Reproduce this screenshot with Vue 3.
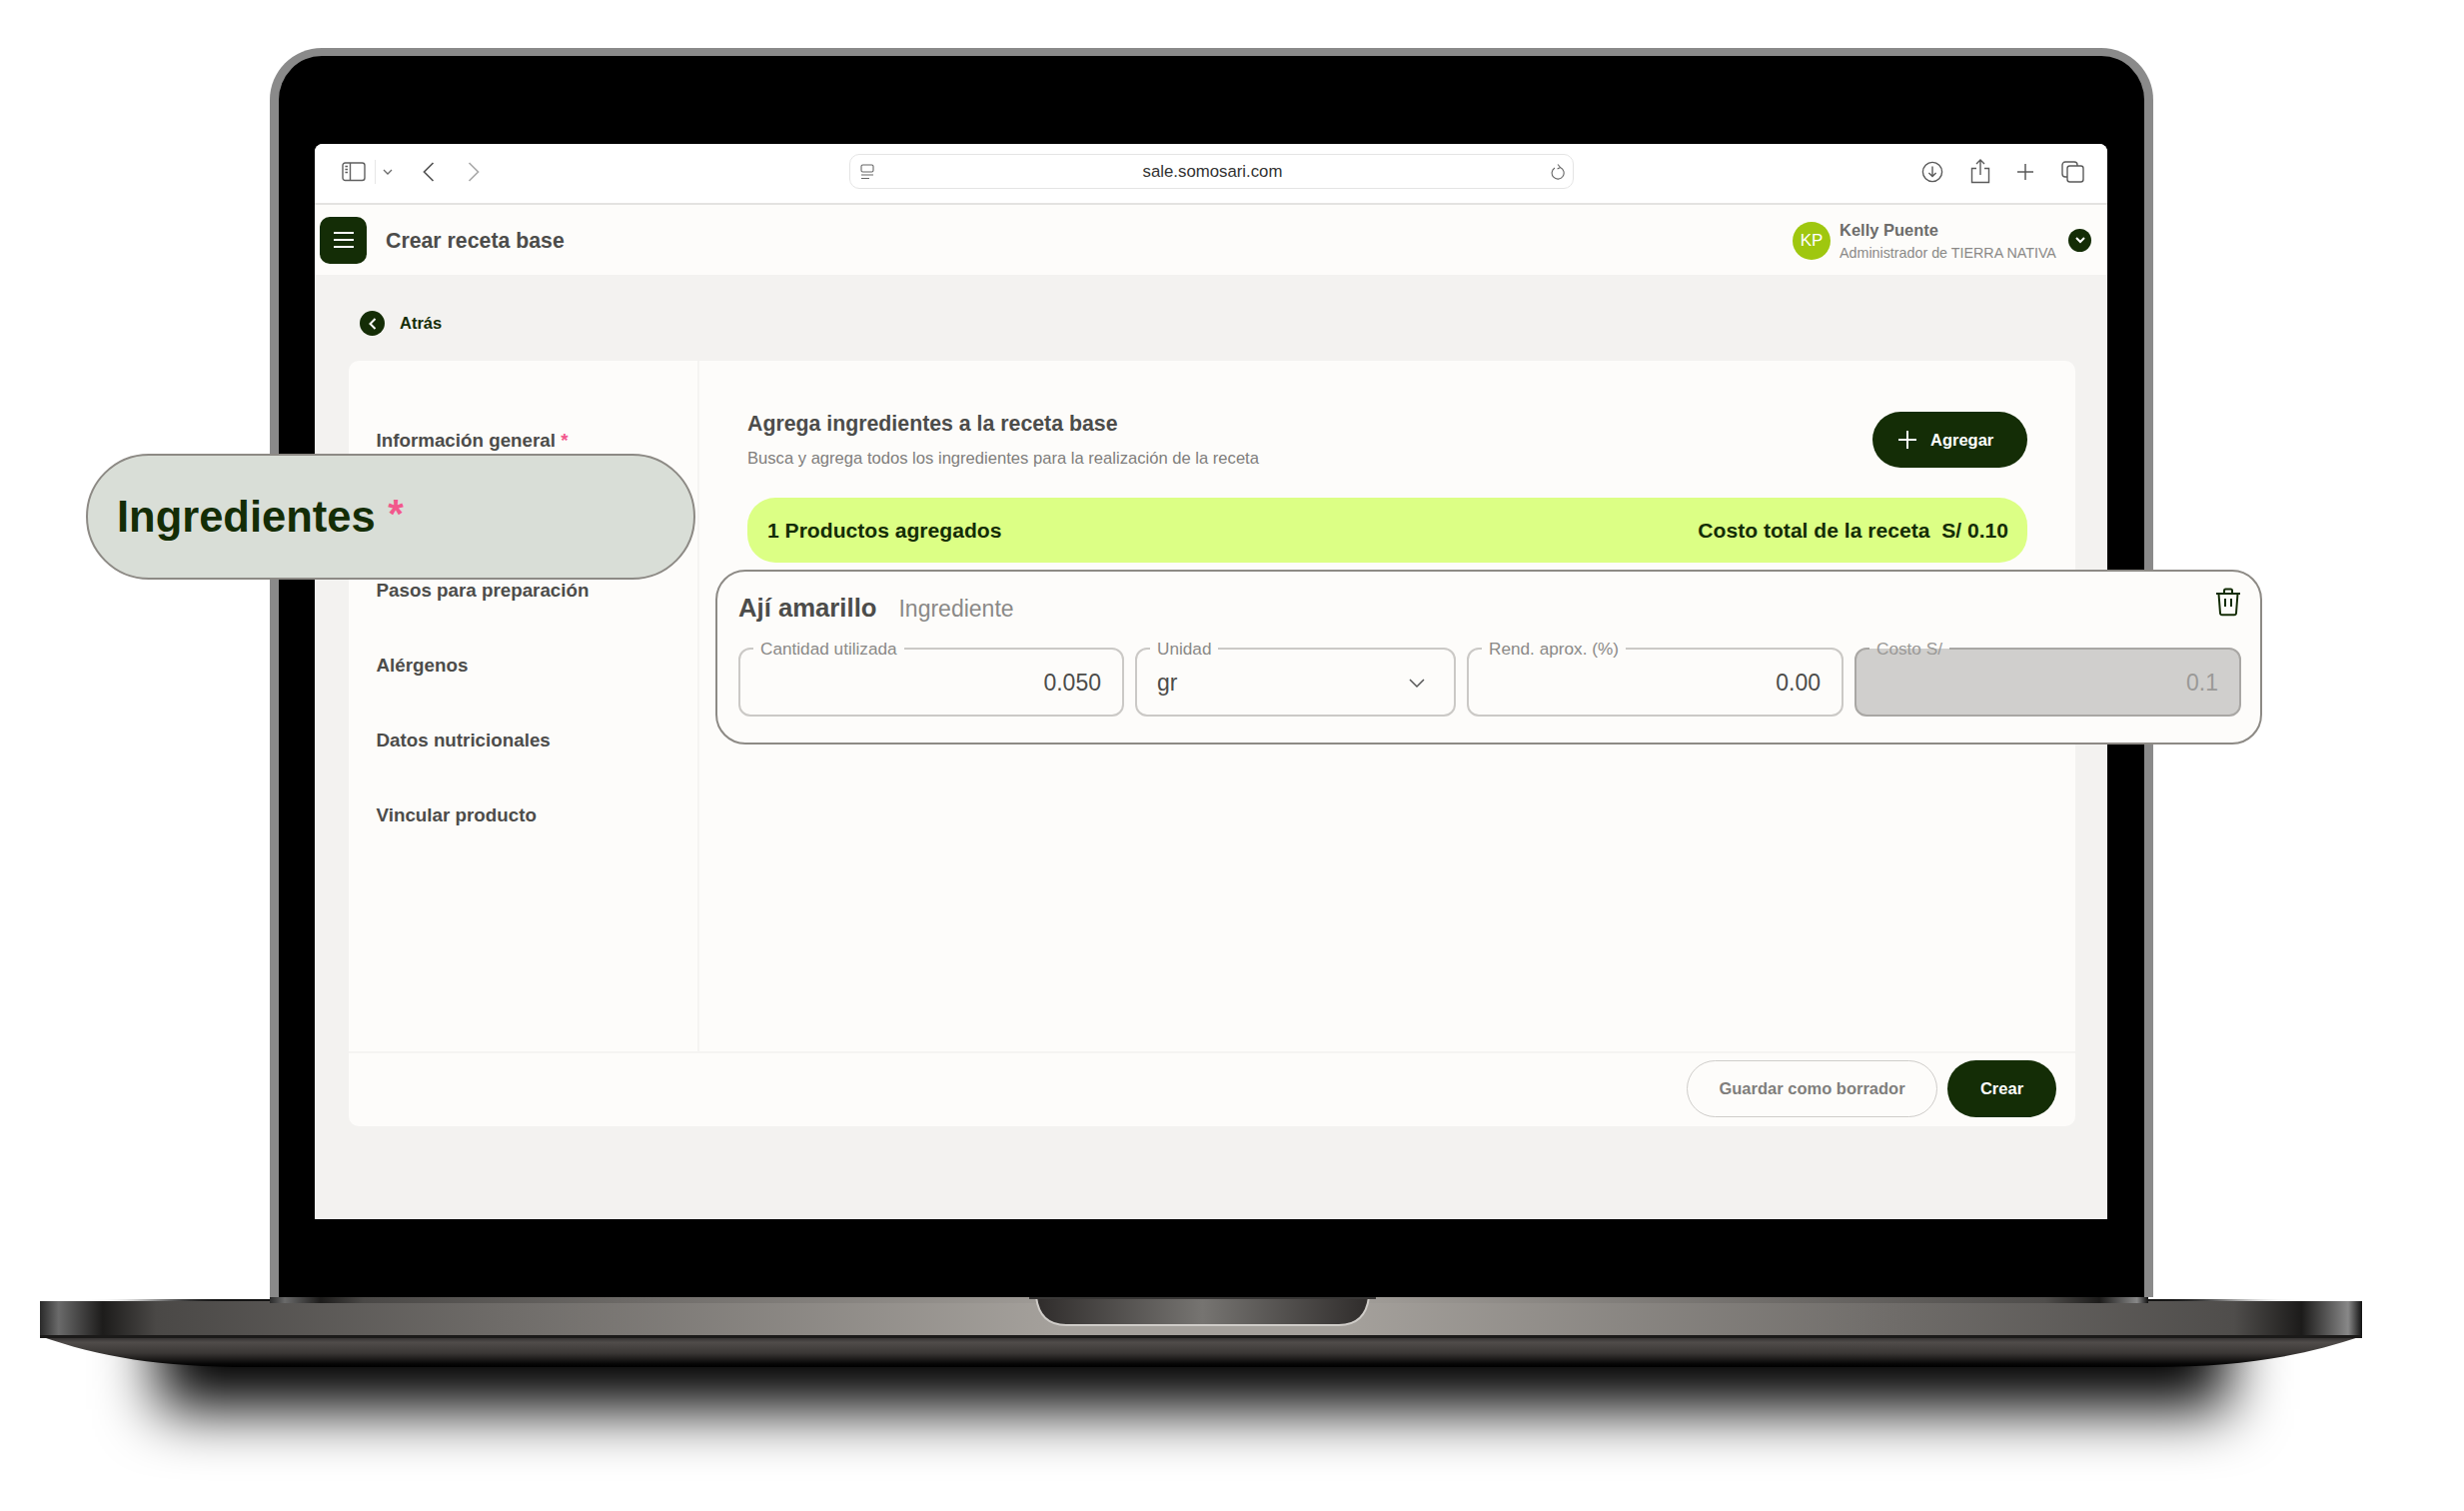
<script setup>
const sections = [
  { label: 'Información general', required: true },
  { spacer: true },
  { label: 'Pasos para preparación' },
  { label: 'Alérgenos' },
  { label: 'Datos nutricionales' },
  { label: 'Vincular producto' },
]
</script>

<template>
  <div class="canvas">
    <div class="floor-shadow"></div>
    <div class="lid">
      <div class="screen">
        <div class="browserbar">
          <div class="bar-left">
            <svg class="ic-sidebar" width="24" height="20" viewBox="0 0 24 20" fill="none" stroke="#5f5f5f" stroke-width="1.4">
              <rect x="1" y="1" width="22" height="17.5" rx="2.5" />
              <path d="M8.5 1v17.5M3.4 4.5h2.6M3.4 7.5h2.6M3.4 10.5h2.6" />
            </svg>
            <span class="sep"></span>
            <svg class="ic-down" width="10" height="6" viewBox="0 0 10 6" fill="none" stroke="#6b6b6b" stroke-width="1.3"><path d="M1 1l4 4 4-4" /></svg>
            <svg class="ic-back" width="12" height="20" viewBox="0 0 12 20" fill="none" stroke="#555" stroke-width="1.7"><path d="M10.5 1L1.5 10l9 9" /></svg>
            <svg class="ic-fwd" width="12" height="20" viewBox="0 0 12 20" fill="none" stroke="#aaa" stroke-width="1.7"><path d="M1.5 1l9 9-9 9" /></svg>
          </div>
          <div class="urlbar">
            <svg class="ic-page" width="14" height="16" viewBox="0 0 14 16" fill="none" stroke="#666" stroke-width="1.1">
              <rect x="1" y="1" width="12" height="7" rx="1.5" />
              <path d="M1 11h12M1 14.5h8" />
            </svg>
            <span class="url">sale.somosari.com</span>
            <svg class="ic-reload" width="14" height="18" viewBox="0 0 14 18" fill="none" stroke="#666" stroke-width="1.1">
              <path d="M9.5 4.6A6 6 0 1 1 4 5M7 1.5l2.6 3-3 1.6" />
            </svg>
          </div>
          <div class="bar-right">
            <svg width="22" height="22" viewBox="0 0 22 22" fill="none" stroke="#5a5a5a" stroke-width="1.4"><circle cx="11" cy="11" r="9.6" /><path d="M11 5.5v10M7.4 12l3.6 3.6 3.6-3.6" /></svg>
            <svg width="20" height="25" viewBox="0 0 20 25" fill="none" stroke="#5a5a5a" stroke-width="1.4"><path d="M6 9.5H1.5v14h17v-14H14M10 16V1.5M6 5l4-4 4 4" /></svg>
            <svg width="18" height="18" viewBox="0 0 18 18" fill="none" stroke="#5a5a5a" stroke-width="1.5"><path d="M9 1v16M1 9h16" /></svg>
            <svg width="23" height="22" viewBox="0 0 23 22" fill="none" stroke="#5a5a5a" stroke-width="1.4"><rect x="6" y="5" width="16" height="16" rx="2.5" /><path d="M6 16H4a3 3 0 0 1-3-3V4a3 3 0 0 1 3-3h9a3 3 0 0 1 3 3v1" /></svg>
          </div>
        </div>

        <header class="apphead">
          <div class="head-left">
            <button class="menu-btn" type="button">
              <svg width="22" height="18" viewBox="0 0 22 18" fill="none" stroke="#fff" stroke-width="2.2"><path d="M1 2h20M1 9h20M1 16h20" /></svg>
            </button>
            <h1 class="page-title">Crear receta base</h1>
          </div>
          <div class="user">
            <span class="avatar">KP</span>
            <div class="user-text">
              <span class="user-name">Kelly Puente</span>
              <span class="user-role">Administrador de TIERRA NATIVA</span>
            </div>
            <span class="user-chev">
              <svg width="10" height="7" viewBox="0 0 10 7" fill="none" stroke="#fff" stroke-width="2"><path d="M1 1l4 4 4-4" /></svg>
            </span>
          </div>
        </header>

        <main class="content">
          <div class="back">
            <span class="back-dot">
              <svg width="8" height="12" viewBox="0 0 8 12" fill="none" stroke="#fff" stroke-width="2"><path d="M6.5 1L1.5 6l5 5" /></svg>
            </span>
            <span class="back-text">Atrás</span>
          </div>

          <section class="card">
            <div class="card-body">
              <nav class="side">
                <template v-for="(s, i) in sections" :key="i">
                  <span v-if="s.spacer" class="side-item"></span>
                  <a v-else class="side-item">{{ s.label }}<span v-if="s.required" class="req"> *</span></a>
                </template>
              </nav>
              <div class="pane">
                <div class="pane-head">
                  <div>
                    <h2 class="pane-title">Agrega ingredientes a la receta base</h2>
                    <p class="pane-sub">Busca y agrega todos los ingredientes para la realización de la receta</p>
                  </div>
                  <button class="add-btn" type="button">
                    <svg width="18" height="18" viewBox="0 0 18 18" fill="none" stroke="#fff" stroke-width="2"><path d="M9 0v18M0 9h18" /></svg>
                    Agregar
                  </button>
                </div>
                <div class="summary">
                  <span>1 Productos agregados</span>
                  <span>Costo total de la receta&nbsp; S/ 0.10</span>
                </div>
              </div>
            </div>
            <footer class="card-foot">
              <button class="ghost-btn" type="button">Guardar como borrador</button>
              <button class="solid-btn" type="button">Crear</button>
            </footer>
          </section>
        </main>
      </div>
    </div>

    <div class="base">
      <svg width="2324" height="72" viewBox="0 0 2324 72">
        <defs>
          <linearGradient id="band" x1="0" x2="1" y1="0" y2="0">
            <stop offset="0" stop-color="#2a2a2a" />
            <stop offset="0.008" stop-color="#6a6a6a" />
            <stop offset="0.027" stop-color="#1d1c1b" />
            <stop offset="0.05" stop-color="#4a4846" />
            <stop offset="0.2" stop-color="#6f6c69" />
            <stop offset="0.44" stop-color="#a5a19c" />
            <stop offset="0.56" stop-color="#a5a19c" />
            <stop offset="0.8" stop-color="#6f6c69" />
            <stop offset="0.945" stop-color="#4f4d4b" />
            <stop offset="0.974" stop-color="#1c1b1a" />
            <stop offset="0.994" stop-color="#888" />
            <stop offset="1" stop-color="#111" />
          </linearGradient>
          <linearGradient id="under" x1="0" x2="0" y1="0" y2="1">
            <stop offset="0" stop-color="#2b2928" />
            <stop offset="0.2" stop-color="#504c4a" />
            <stop offset="0.55" stop-color="#3a3735" />
            <stop offset="0.9" stop-color="#060606" />
            <stop offset="1" stop-color="#000" />
          </linearGradient>
          <linearGradient id="notch" x1="0" x2="1" y1="0" y2="0">
            <stop offset="0" stop-color="#2f2c2b" />
            <stop offset="0.5" stop-color="#767471" />
            <stop offset="1" stop-color="#2f2c2b" />
          </linearGradient>
        </defs>
        <path d="M0 39 C60 60 120 70 210 70 H2114 C2200 70 2262 60 2324 39 Z" fill="url(#under)" />
        <rect x="0" y="4" width="2324" height="36" fill="url(#band)" />
        <rect x="230" y="0" width="1880" height="6" fill="url(#band)" />
        <rect x="0" y="38" width="2324" height="3" fill="#1b1a19" />
        <path d="M997 0 H1330 C1328 16 1320 28 1300 28 H1027 C1007 28 999 16 997 0 Z" fill="url(#notch)" stroke="#cfccc8" stroke-width="2" />
        <rect x="990" y="0" width="347" height="2" fill="#3a3837" />
      </svg>
    </div>

    <div class="pill">
      <span class="pill-text">Ingredientes</span>
      <span class="pill-star">*</span>
    </div>

    <div class="ingredient">
      <div class="ing-head">
        <div class="ing-title">
          <strong>Ají amarillo</strong>
          <span>Ingrediente</span>
        </div>
        <svg class="trash" width="26" height="29" viewBox="0 0 26 29" fill="none" stroke="#142d06" stroke-width="2">
          <path d="M1 6h24M9 6V3a1.500 1.500 0 0 1 1.500-1.500h5A1.500 1.500 0 0 1 17 3v3M3.500 6l1.500 19.500a2 2 0 0 0 2 1.800h12a2 2 0 0 0 2-1.800L22.500 6M10 11v8M16 11v8" />
        </svg>
      </div>
      <div class="fields">
        <div class="field f1"><label>Cantidad utilizada</label><div class="val right">0.050</div></div>
        <div class="field f2">
          <label>Unidad</label>
          <div class="val">gr</div>
          <svg class="select-chev" width="16" height="10" viewBox="0 0 16 10" fill="none" stroke="#555" stroke-width="1.500"><path d="M1 1l7 7 7-7" /></svg>
        </div>
        <div class="field f3"><label>Rend. aprox. (%)</label><div class="val right">0.00</div></div>
        <div class="field f4 disabled"><label>Costo S/</label><div class="val right">0.1</div></div>
      </div>
    </div>
  </div>
</template>

<style>
html, body { margin: 0; background: #fff; }
</style>

<style scoped>
* { box-sizing: border-box; }
.canvas {
  position: relative;
  width: 2466px;
  height: 1512px;
  padding-top: 48px;
  overflow: hidden;
  background: #fff;
  font-family: "Liberation Sans", Arial, sans-serif;
}
.lid {
  position: relative;
  z-index: 2;
  width: 1885px;
  height: 1250px;
  margin-left: 270px;
  padding: 88px 36px 0 36px;
  background: #000;
  border: solid #8a8a8a;
  border-width: 8px 9px 0 9px;
  border-radius: 52px 52px 0 0;
}
.screen {
  width: 1794px;
  height: 1076px;
  background: #f3f2f0;
  border-radius: 8px 8px 0 0;
  overflow: hidden;
}
.browserbar {
  height: 61px;
  padding-bottom: 4px;
  background: #fff;
  border-bottom: 2px solid #e4e3e1;
  display: flex;
  align-items: center;
}
.bar-left {
  width: 535px;
  display: flex;
  align-items: center;
  padding-left: 27px;
}
.sep { width: 1px; height: 24px; background: #e6e6e6; margin: 0 7px 0 9px; }
.ic-back { margin-left: 30px; }
.ic-fwd { margin-left: 33px; }
.urlbar {
  width: 725px;
  height: 35px;
  border: 1.500px solid #e4e4e4;
  border-radius: 10px;
  display: flex;
  align-items: center;
  justify-content: space-between;
  padding: 0 8px 0 10px;
}
.url { font-size: 16.800px; color: #333; }
.bar-right {
  flex: 1;
  display: flex;
  align-items: center;
  justify-content: flex-end;
  gap: 26.500px;
  padding-right: 23.500px;
}
.apphead {
  height: 70px;
  background: #fdfcfa;
  display: flex;
  align-items: center;
  justify-content: space-between;
  padding: 0 16px 0 5px;
}
.head-left { display: flex; align-items: center; gap: 19px; }
.menu-btn {
  width: 47px;
  height: 47px;
  border: 0;
  border-radius: 10px;
  background: #142d06;
  display: flex;
  align-items: center;
  justify-content: center;
  padding: 0;
}
.page-title { margin: 2px 0 0; font-size: 21.300px; font-weight: 700; color: #4c4c4a; }
.user { display: flex; align-items: center; }
.avatar {
  width: 38px;
  height: 38px;
  margin-top: 2px;
  border-radius: 50%;
  background: #9fc70f;
  color: #fff;
  font-size: 17px;
  display: flex;
  align-items: center;
  justify-content: center;
}
.user-text { display: flex; flex-direction: column; gap: 6px; margin-left: 9px; width: 229px; padding-top: 2px; }
.user-name { font-size: 16.500px; font-weight: 700; color: #6d6c6a; line-height: 18px; }
.user-role { font-size: 14.300px; color: #8a8987; line-height: 16px; white-space: nowrap; }
.user-chev {
  width: 23px;
  height: 23px;
  border-radius: 50%;
  background: #142d06;
  display: flex;
  align-items: center;
  justify-content: center;
}
.content { padding: 36px 0 0 34px; }
.back { display: flex; align-items: center; gap: 15px; margin-left: 11px; height: 25px; }
.back-dot {
  width: 25px;
  height: 25px;
  border-radius: 50%;
  background: #142d06;
  display: flex;
  align-items: center;
  justify-content: center;
}
.back-text { font-size: 16.500px; font-weight: 700; color: #142d06; }
.card {
  margin-top: 25px;
  width: 1728px;
  height: 766px;
  background: #fdfcfa;
  border-radius: 10px;
  display: flex;
  flex-direction: column;
}
.card-body { flex: 1; display: flex; min-height: 0; }
.side {
  width: 351px;
  border-right: 2px solid #f5f4f2;
  padding: 70px 0 0 27.500px;
  display: flex;
  flex-direction: column;
  gap: 55px;
}
.side-item {
  font-size: 18.800px;
  font-weight: 700;
  color: #4c4c4a;
  line-height: 20px;
  height: 20px;
}
.req { color: #f2588c; font-weight: 700; }
.pane { flex: 1; padding: 51px 48px 0 48px; }
.pane-head { display: flex; justify-content: space-between; align-items: flex-start; }
.pane-title { margin: 0; font-size: 21.300px; font-weight: 700; color: #4c4c4a; line-height: 24px; }
.pane-sub { margin: 14px 0 0; font-size: 16.600px; color: #7f7e7c; line-height: 18px; }
.add-btn {
  width: 155px;
  height: 56px;
  border: 0;
  border-radius: 28px;
  background: #142d06;
  color: #fff;
  font: 700 16.500px "Liberation Sans", Arial, sans-serif;
  display: flex;
  align-items: center;
  gap: 14px;
  padding: 0 0 0 26px;
}
.summary {
  margin-top: 30px;
  height: 65px;
  border-radius: 28px;
  background: #dcff85;
  display: flex;
  align-items: center;
  justify-content: space-between;
  padding: 0 19px 0 20px;
  font-size: 21.100px;
  font-weight: 700;
  color: #142d06;
}
.card-foot {
  height: 75px;
  border-top: 2px solid #f5f4f2;
  display: flex;
  justify-content: flex-end;
  align-items: flex-start;
  gap: 10px;
  padding: 7px 19px 0 0;
}
.ghost-btn, .solid-btn {
  height: 57px;
  border-radius: 29px;
  font: 700 16.500px "Liberation Sans", Arial, sans-serif;
}
.ghost-btn { width: 251px; background: #fdfcfa; border: 1.500px solid #cfcdca; color: #7f7e7c; }
.solid-btn { width: 109px; background: #142d06; border: 0; color: #fff; }

.base { position: relative; z-index: 1; margin-left: 40px; height: 72px; line-height: 0; }
.floor-shadow {
  position: absolute;
  z-index: 0;
  left: 0;
  top: 1300px;
  width: 2466px;
  height: 212px;
  overflow: hidden;
}
.floor-shadow::before {
  content: "";
  position: absolute;
  left: 158px;
  top: -40px;
  width: 2072px;
  height: 150px;
  background: #000;
  filter: blur(30px);
}
.pill {
  position: absolute;
  z-index: 3;
  left: 86px;
  top: 454px;
  width: 610px;
  height: 126px;
  border-radius: 63px;
  background: #d9ded7;
  border: 2px solid #8d8a85;
  display: flex;
  align-items: center;
  padding-left: 29px;
  gap: 12.500px;
}
.pill-text { font-size: 43.500px; font-weight: 700; color: #142d06; }
.pill-star { font-size: 40px; font-weight: 700; color: #f2588c; line-height: 1; margin-top: -6px; }
.ingredient {
  position: absolute;
  z-index: 3;
  left: 716px;
  top: 570px;
  width: 1548px;
  height: 175px;
  border: 2px solid #8d8a85;
  border-radius: 30px;
  background: #fdfcfa;
  padding: 18px 19px 0 21px;
}
.ing-head { display: flex; justify-content: space-between; align-items: flex-start; height: 58px; }
.ing-title { display: flex; align-items: baseline; gap: 22px; padding-top: 4px; }
.ing-title strong { font-size: 25.700px; color: #4c4c4a; }
.ing-title span { font-size: 23px; color: #8a8987; }
.trash { margin-top: -2px; }
.fields { display: flex; gap: 11px; }
.field {
  position: relative;
  height: 69px;
  border: 2px solid #cbc9c6;
  border-radius: 12px;
  display: flex;
  align-items: center;
  padding: 0 21px 0 20px;
}
.f1 { width: 386px; }
.f2 { width: 321px; }
.f3 { width: 377px; }
.f4 { width: 387px; }
.field label {
  position: absolute;
  left: 13px;
  top: -11px;
  padding: 0 7px;
  background: #fdfcfa;
  font-size: 17.200px;
  line-height: 20px;
  color: #8a8987;
}
.val { flex: 1; font-size: 23px; color: #4c4c4a; padding-top: 2px; }
.val.right { text-align: right; }
.select-chev { position: absolute; right: 29px; top: 29px; }
.disabled { background: #d0cfcd; border-color: #a9a7a4; }
.disabled label { background: linear-gradient(#fdfcfa 50%, #d0cfcd 50%); color: #9a9997; }
.disabled .val { color: #9a9997; }
</style>
